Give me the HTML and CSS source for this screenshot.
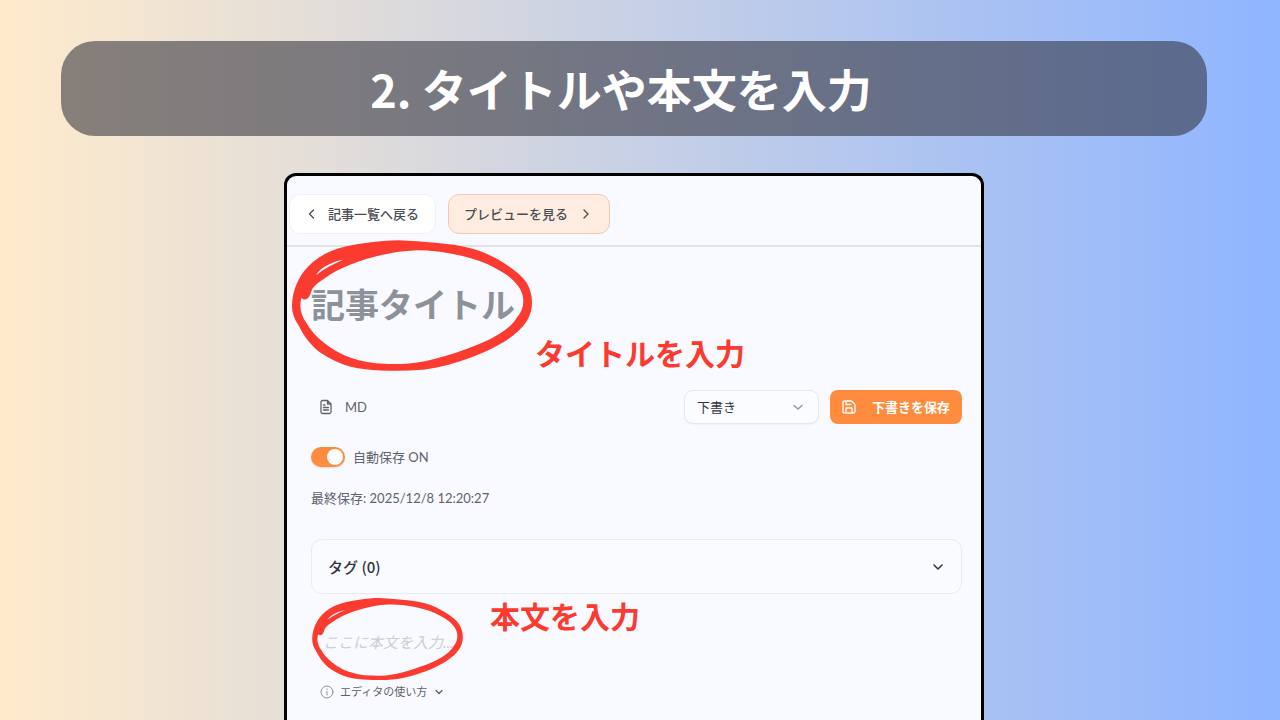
FILE: index.html
```html
<!DOCTYPE html>
<html lang="ja">
<head>
<meta charset="utf-8">
<meta name="viewport" content="width=device-width, initial-scale=1">
<title>タイトルや本文を入力</title>
<link rel="stylesheet" href="styles.css">
</head>
<body>
<svg class="defs" aria-hidden="true">
  <symbol id="ring" viewBox="36 29 720 392">
    <path fill-rule="evenodd" d="M36 227C36 190 48 154 72 122C90 99 114 81 142 67C178 50 220 42 262 37C294 32 326 29 357 29C394 31 430 33 465 37C503 40 540 45 575 54C611 64 645 80 675 100C702 117 725 135 740 157C751 175 756 196 756 217C756 236 751 255 740 272C724 297 701 315 675 332C644 351 610 367 575 380C529 397 482 410 435 417C391 421 346 422 302 420C271 418 241 417 212 409C180 400 150 386 122 367C97 349 72 318 57 287C43 266 36 247 36 227Z
    M64 202C62 210 61 218 61 227C62 244 67 259 77 274C91 299 109 320 132 337C157 357 184 372 212 382C244 393 278 399 312 400C353 402 394 400 435 392C476 384 516 371 555 357C590 345 624 331 655 312C677 298 699 283 710 262C723 247 730 230 730 212C730 196 725 181 715 167C702 150 686 136 665 124C637 106 607 93 575 84C539 74 503 66 465 62C444 60 423 59 402 60C372 62 342 65 312 72C277 79 244 89 212 102C183 113 156 127 132 145C118 153 106 163 97 175C92 186 90 204 77 207C72 208 67 206 64 202Z
    M108 134C118 116 146 96 191 87C164 99 134 113 108 134Z"/>
  </symbol>
</svg>
<div class="slide">
  <h1 class="banner">2. タイトルや本文を入力</h1>

  <section class="panel">
    <header class="topbar">
      <button class="btn btn-back" type="button">
        <svg class="icon" viewBox="0 0 14 14"><path d="M8.500 3L4.500 7l4 4"/></svg>
        記事一覧へ戻る
      </button>
      <button class="btn btn-preview" type="button">
        プレビューを見る
        <svg class="icon" viewBox="0 0 14 14"><path d="M5 3l4 4-4 4"/></svg>
      </button>
    </header>

    <main class="editor">
      <input class="title-input" type="text" placeholder="記事タイトル" aria-label="記事タイトル">

      <div class="toolbar">
        <span class="format">
          <svg class="icon-file" viewBox="0 0 16 16"><path d="M9.500 1.500H4.500a1.500 1.500 0 0 0-1.500 1.500v10a1.500 1.500 0 0 0 1.500 1.500h7a1.500 1.500 0 0 0 1.500-1.500V5zM9.500 1.500V5H13M5.500 6h1.500M5.500 8.500h5M5.500 11h5"/></svg>
          MD
        </span>
        <div class="select-wrap">
          <select class="status" aria-label="公開状態"><option>下書き</option></select>
          <svg class="select-arrow" viewBox="0 0 12 12"><path d="M2 4.500L6 8l4-3.500"/></svg>
        </div>
        <button class="btn-save" type="button">
          <svg class="icon-save" viewBox="0 0 14 14"><path d="M1 2.500A1.500 1.500 0 0 1 2.500 1H9.500L13 4.500v7a1.500 1.500 0 0 1-1.500 1.500h-9A1.500 1.500 0 0 1 1 11.500zM4 1v3.500h5M4 13V8h6v5"/></svg>
          下書きを保存
        </button>
      </div>

      <label class="autosave">
        <input class="switch" type="checkbox" role="switch" checked>
        自動保存 ON
      </label>
      <p class="saved-at">最終保存: 2025/12/8 12:20:27</p>

      <button class="tags" type="button">
        <span>タグ (0)</span>
        <svg class="icon-small" viewBox="0 0 12 12"><path d="M2 4l4 4 4-4"/></svg>
      </button>

      <textarea class="body-input" rows="1" placeholder="ここに本文を入力..." aria-label="本文"></textarea>

      <button class="help" type="button">
        <svg class="icon-info" viewBox="0 0 14 14"><circle cx="7" cy="7" r="6"/><path d="M7 6.500v3.500M7 4v.5"/></svg>
        エディタの使い方
        <svg class="icon-tiny" viewBox="0 0 12 12"><path d="M3 4.500l3 3 3-3"/></svg>
      </button>
    </main>

    <svg class="ring ring-title" aria-hidden="true"><use href="#ring"/></svg>
    <p class="note note-title">タイトルを入力</p>
    <svg class="ring ring-body" aria-hidden="true"><use href="#ring"/></svg>
    <p class="note note-body">本文を入力</p>
  </section>
</div>
</body>
</html>
```
FILE: styles.css
```css
* {
  box-sizing: border-box;
}

body {
  margin: 0;
  background: linear-gradient(90deg, #ffebcc, #8fb5ff);
  font-family: Lato, "Noto Sans CJK JP", sans-serif;
  font-size: 13px;
  line-height: 20px;
  color: #5d626c;
}

button,
input,
select,
textarea {
  margin: 0;
  font: inherit;
  color: inherit;
}

svg {
  flex: none;
  fill: none;
  stroke: currentColor;
  stroke-width: 1.3;
  stroke-linecap: round;
  stroke-linejoin: round;
}

.defs {
  position: absolute;
  width: 0;
  height: 0;
}

.slide {
  display: flex;
  flex-direction: column;
  align-items: center;
  gap: 37px;
  height: 100vh;
  padding: 41px 73px 0 61px;
  overflow: hidden;
}

.banner {
  flex: none;
  width: 100%;
  margin: 0;
  padding: 18px 26px 17px 0;
  border-radius: 34px;
  background: rgba(45, 45, 56, 0.56);
  color: #fff;
  font: 700 45px/60px "Noto Sans CJK JP", sans-serif;
  text-align: center;
}

.panel {
  position: relative;
  flex: 1;
  width: 100%;
  max-width: 700px;
  border: 3px solid #000;
  border-bottom: 0;
  border-radius: 12px 12px 0 0;
  background: #f9faff;
}

.topbar {
  display: flex;
  gap: 12px;
  padding: 18px 2px 11px;
  border-bottom: 2px solid #e1e3e8;
}

.btn {
  display: flex;
  align-items: center;
  height: 40px;
  padding: 0 15px;
  border: 1px solid #f0f1f5;
  border-radius: 11px;
  font-weight: 500;
  line-height: 18px;
  color: #494c52;
}

.icon {
  width: 14px;
  height: 14px;
}

.btn-back {
  gap: 9px;
  padding-right: 16px;
  background: #fff;
}

.btn-preview {
  gap: 11px;
  padding-right: 16px;
  border-color: #f3c9b3;
  background: #ffece0;
}

.editor {
  display: flex;
  flex-direction: column;
  align-items: flex-start;
  padding: 33px 19px 0 24px;
}

.title-input {
  width: 100%;
  height: 48px;
  padding: 0;
  border: 0;
  outline: 0;
  background: transparent;
  font-size: 34px;
  font-weight: 700;
}

.title-input::placeholder {
  color: #8d9199;
}

.toolbar {
  display: flex;
  align-items: center;
  gap: 11px;
  width: 100%;
  margin-top: 62px;
}

.format {
  display: flex;
  align-items: center;
  gap: 11px;
  margin-right: auto;
  padding-left: 7px;
}

.icon-file {
  width: 16px;
  height: 16px;
}

.select-wrap {
  position: relative;
  width: 135px;
}

.status {
  appearance: none;
  width: 100%;
  height: 34px;
  padding: 0 12px;
  border: 1px solid #e5e7ec;
  border-radius: 9px;
  background: #fbfcff;
  box-shadow: 0 1px 2px rgba(0, 0, 0, 0.04);
  color: #33373f;
}

.select-arrow {
  position: absolute;
  top: 11px;
  right: 15px;
  width: 12px;
  height: 12px;
  color: #8d9199;
  pointer-events: none;
}

.btn-save {
  display: flex;
  align-items: center;
  gap: 16px;
  height: 34px;
  padding: 0 12px;
  border: 0;
  border-radius: 8px;
  background: #ff8c3e;
  color: #fff;
  font-weight: 700;
}

.icon-save {
  width: 14px;
  height: 14px;
}

.autosave {
  display: flex;
  align-items: center;
  gap: 8px;
  margin-top: 23px;
}

.switch {
  appearance: none;
  display: flex;
  width: 34px;
  height: 20px;
  padding: 2px;
  border-radius: 10px;
  background: #ff8c3e;
  box-shadow: 0 1px 2px rgba(0, 0, 0, 0.12);
}

.switch::before {
  content: "";
  width: 16px;
  height: 16px;
  border-radius: 50%;
  background: #fff;
}

.switch:checked::before {
  margin-left: auto;
}

.saved-at {
  margin: 21px 0 0;
}

.tags {
  display: flex;
  align-items: center;
  justify-content: space-between;
  width: 100%;
  height: 55px;
  margin-top: 31px;
  padding: 0 17px 0 16px;
  border: 1px solid #e9ebf0;
  border-radius: 11px;
  background: #fafbff;
  color: #33363f;
  font-family: "Noto Sans CJK JP", sans-serif;
  font-size: 15px;
  font-weight: 500;
}

.icon-small {
  width: 12px;
  height: 12px;
  stroke-width: 1.6;
}

.body-input {
  width: 100%;
  height: 30px;
  margin-top: 33px;
  padding: 0 12px;
  border: 0;
  outline: 0;
  resize: none;
  overflow: hidden;
  background: transparent;
  font-size: 15px;
  font-style: italic;
  line-height: 30px;
}

.body-input::placeholder {
  color: #cbcdd2;
}

.help {
  display: flex;
  align-items: center;
  gap: 6px;
  height: 20px;
  margin-top: 25px;
  padding: 0 9px;
  border: 0;
  background: none;
  font-size: 11px;
}

.icon-info {
  width: 14px;
  height: 14px;
  stroke-width: 1;
  color: #8d9199;
}

.icon-tiny {
  width: 12px;
  height: 12px;
}

/* Hand-drawn annotations lying over the editor */
.ring,
.note {
  position: absolute;
}

.ring {
  fill: #fb3a30;
  stroke: none;
  pointer-events: none;
}

.ring-title {
  top: 64px;
  left: 5px;
  width: 240px;
  height: 131px;
}

.ring-body {
  top: 422px;
  left: 25px;
  width: 151px;
  height: 82px;
}

.note {
  margin: 0;
  color: #fb3a30;
  font: 700 30px/40px "Noto Sans CJK JP", sans-serif;
  white-space: nowrap;
}

.note-title {
  top: 156px;
  left: 248px;
}

.note-body {
  top: 419px;
  left: 203px;
}
```
